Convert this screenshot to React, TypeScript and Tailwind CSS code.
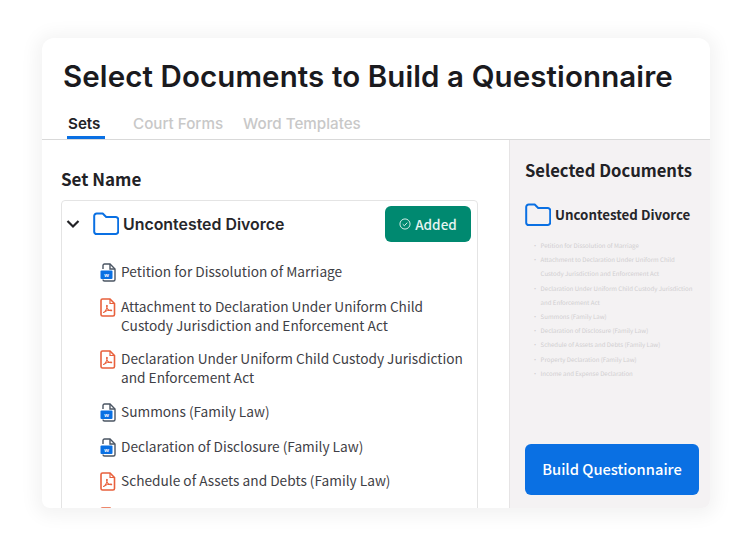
const bodyFont = "font-['Noto_Sans_CJK_SC','Noto_Sans',sans-serif]";

const documents = [
  { type: "word", name: "Petition for Dissolution of Marriage" },
  { type: "pdf", name: "Attachment to Declaration Under Uniform Child Custody Jurisdiction and Enforcement Act" },
  { type: "pdf", name: "Declaration Under Uniform Child Custody Jurisdiction and Enforcement Act" },
  { type: "word", name: "Summons (Family Law)" },
  { type: "word", name: "Declaration of Disclosure (Family Law)" },
  { type: "pdf", name: "Schedule of Assets and Debts (Family Law)" },
  { type: "pdf", name: "Property Declaration (Family Law)" },
];

const selected = [
  "Petition for Dissolution of Marriage",
  "Attachment to Declaration Under Uniform Child Custody Jurisdiction and Enforcement Act",
  "Declaration Under Uniform Child Custody Jurisdiction and Enforcement Act",
  "Summons (Family Law)",
  "Declaration of Disclosure (Family Law)",
  "Schedule of Assets and Debts (Family Law)",
  "Property Declaration (Family Law)",
  "Income and Expense Declaration",
];

const FolderIcon = () => (
  <svg width="26" height="24" viewBox="0 0 26 24" fill="none" className="shrink-0">
    <path
      d="M1.200 4a2.500 2.500 0 0 1 2.500-2.500h6l3.500 3.500h9.500a2.500 2.500 0 0 1 2.500 2.500v12a2.500 2.500 0 0 1-2.500 2.500H3.700A2.500 2.500 0 0 1 1.200 20z"
      stroke="#0a70e3"
      strokeWidth="2"
      strokeLinejoin="round"
    />
  </svg>
);

const WordIcon = () => (
  <svg width="16" height="19" viewBox="0 0 16 19" fill="none" className="mt-px shrink-0">
    <path d="M3 6V2.500A1.500 1.500 0 0 1 4.500 1H10l5 5v10.500a1.500 1.500 0 0 1-1.500 1.500h-9A1.500 1.500 0 0 1 3 16.500" stroke="#4b5563" strokeWidth="1.400" />
    <path d="M10 1v5h5" stroke="#4b5563" strokeWidth="1.400" />
    <rect x="0.500" y="7.500" width="12" height="8.500" rx="1" fill="#0a70e3" />
    <text x="6.500" y="14" textAnchor="middle" fontSize="6" fontWeight="700" fill="#fff" fontFamily="Liberation Sans">w</text>
  </svg>
);

const PdfIcon = () => (
  <svg width="16" height="19" viewBox="0 0 16 19" fill="none" className="mt-px shrink-0">
    <path d="M2.500 1h7.500l4.500 4.500v11a1.500 1.500 0 0 1-1.500 1.500H2.500A1.500 1.500 0 0 1 1 16.500V2.500A1.500 1.500 0 0 1 2.500 1z" stroke="#e8603c" strokeWidth="1.600" />
    <path d="M10 1v4.500h4.500" stroke="#e8603c" strokeWidth="1.200" />
    <path d="M3.500 14.500c1.800-1 3.300-3.500 3.800-6.500.200-1-.900-1-.800 0 .300 2.500 2 4.500 4.500 4.800.900.100.900-.800 0-.800-2.500 0-5.500 1-7.500 2.500z" stroke="#e8603c" strokeWidth="1.100" strokeLinejoin="round" />
  </svg>
);

export default function App() {
  return (
    <div className="h-[547px] w-[750px] overflow-hidden bg-white pl-[42px] pt-[38px]">
      <div className="flex h-[470px] w-[668px] flex-col overflow-hidden rounded-t-xl rounded-b-lg bg-white shadow-[0_2px_18px_6px_rgba(0,0,0,0.05)]">
        <header className="h-[102px] shrink-0 border-b border-[#d9d9d9] font-['Inter',sans-serif]">
          <h1 className="ml-[21px] mt-[19px] text-[29.500px] font-semibold leading-[38px] tracking-[0.1px] whitespace-nowrap text-[#1a1a1e]">
            Select Documents to Build a Questionnaire
          </h1>
          <nav className="mt-[17px] flex pl-[26px] text-[15.200px] font-medium leading-[24px]">
            <span className="relative w-[65px] font-semibold text-[#222226]">
              Sets
              <span className="absolute -bottom-[3px] -left-px h-[3px] w-[38px] bg-[#0a70e3]" />
            </span>
            <span className="w-[110px] text-[#c8c8c8]">Court Forms</span>
            <span className="text-[#c8c8c8]">Word Templates</span>
          </nav>
        </header>

        <div className="flex min-h-0 flex-1">
          <main className="flex-1 pl-[19px] pr-[31px] pt-[26px]">
            <h2 className={`${bodyFont} text-[17px] font-semibold leading-[26px] text-[#222226]`}>Set Name</h2>
            <div className="mt-[8px] h-[320px] rounded-t border border-[#e4e4e4]">
              <div className="flex items-center pl-[4px] pr-[6px] pt-[5px]">
                <svg width="14" height="10" viewBox="0 0 14 10" fill="none" className="mr-[13px] shrink-0">
                  <path d="M1.500 2l5.500 5.500L12.500 2" stroke="#222226" strokeWidth="2.200" />
                </svg>
                <FolderIcon />
                <span className="ml-[4px] flex-1 pt-[1px] font-['Inter',sans-serif] text-[15.900px] font-semibold text-[#26262a]">Uncontested Divorce</span>
                <span className={`${bodyFont} flex h-[36px] w-[86px] items-center justify-center gap-[4px] rounded-md bg-[#008970] text-[13.500px] font-medium text-[#e6f4f1]`}>
                  <svg width="12" height="12" viewBox="0 0 13 13" fill="none">
                    <circle cx="6.500" cy="6.500" r="5.500" stroke="#e6f4f1" />
                    <path d="M4 6.700l1.800 1.700 3.200-3.400" stroke="#e6f4f1" />
                  </svg>
                  Added
                </span>
              </div>
              <ul className={`${bodyFont} ml-[38px] mr-[10px] mt-[20px] flex flex-col gap-[14.700px] text-[13.700px] leading-[19px] text-[#3f3f46]`}>
                {documents.map((doc) => (
                  <li key={doc.name} className="flex gap-[5px]">
                    {doc.type === "word" ? <WordIcon /> : <PdfIcon />}
                    <span>{doc.name}</span>
                  </li>
                ))}
              </ul>
            </div>
          </main>

          <aside className={`${bodyFont} flex w-[201px] shrink-0 flex-col border-l border-[#e6e4e5] bg-[#f4f2f3] pb-[13px] pl-[15px] pr-[11px] pt-[17px]`}>
            <h2 className="text-[16.600px] font-semibold leading-[26px] whitespace-nowrap text-[#222226]">Selected Documents</h2>
            <div className="mt-[20px] flex items-center gap-[4px]">
              <FolderIcon />
              <span className="text-[13.300px] font-semibold whitespace-nowrap text-[#26262a]">Uncontested Divorce</span>
            </div>
            <ul className="mt-[12px] flex flex-col text-[6.080px] leading-[14.200px] text-[#d0ced0] [text-rendering:geometricPrecision]">
              {selected.map((name) => (
                <li key={name} className="flex gap-[2.500px] pl-[7px]">
                  <span>•</span>
                  <span>{name}</span>
                </li>
              ))}
            </ul>
            <button className="mt-auto h-[51px] w-[174px] rounded-md bg-[#0a70e3] text-[14.700px] font-medium text-white">
              Build Questionnaire
            </button>
          </aside>
        </div>
      </div>
    </div>
  );
}
